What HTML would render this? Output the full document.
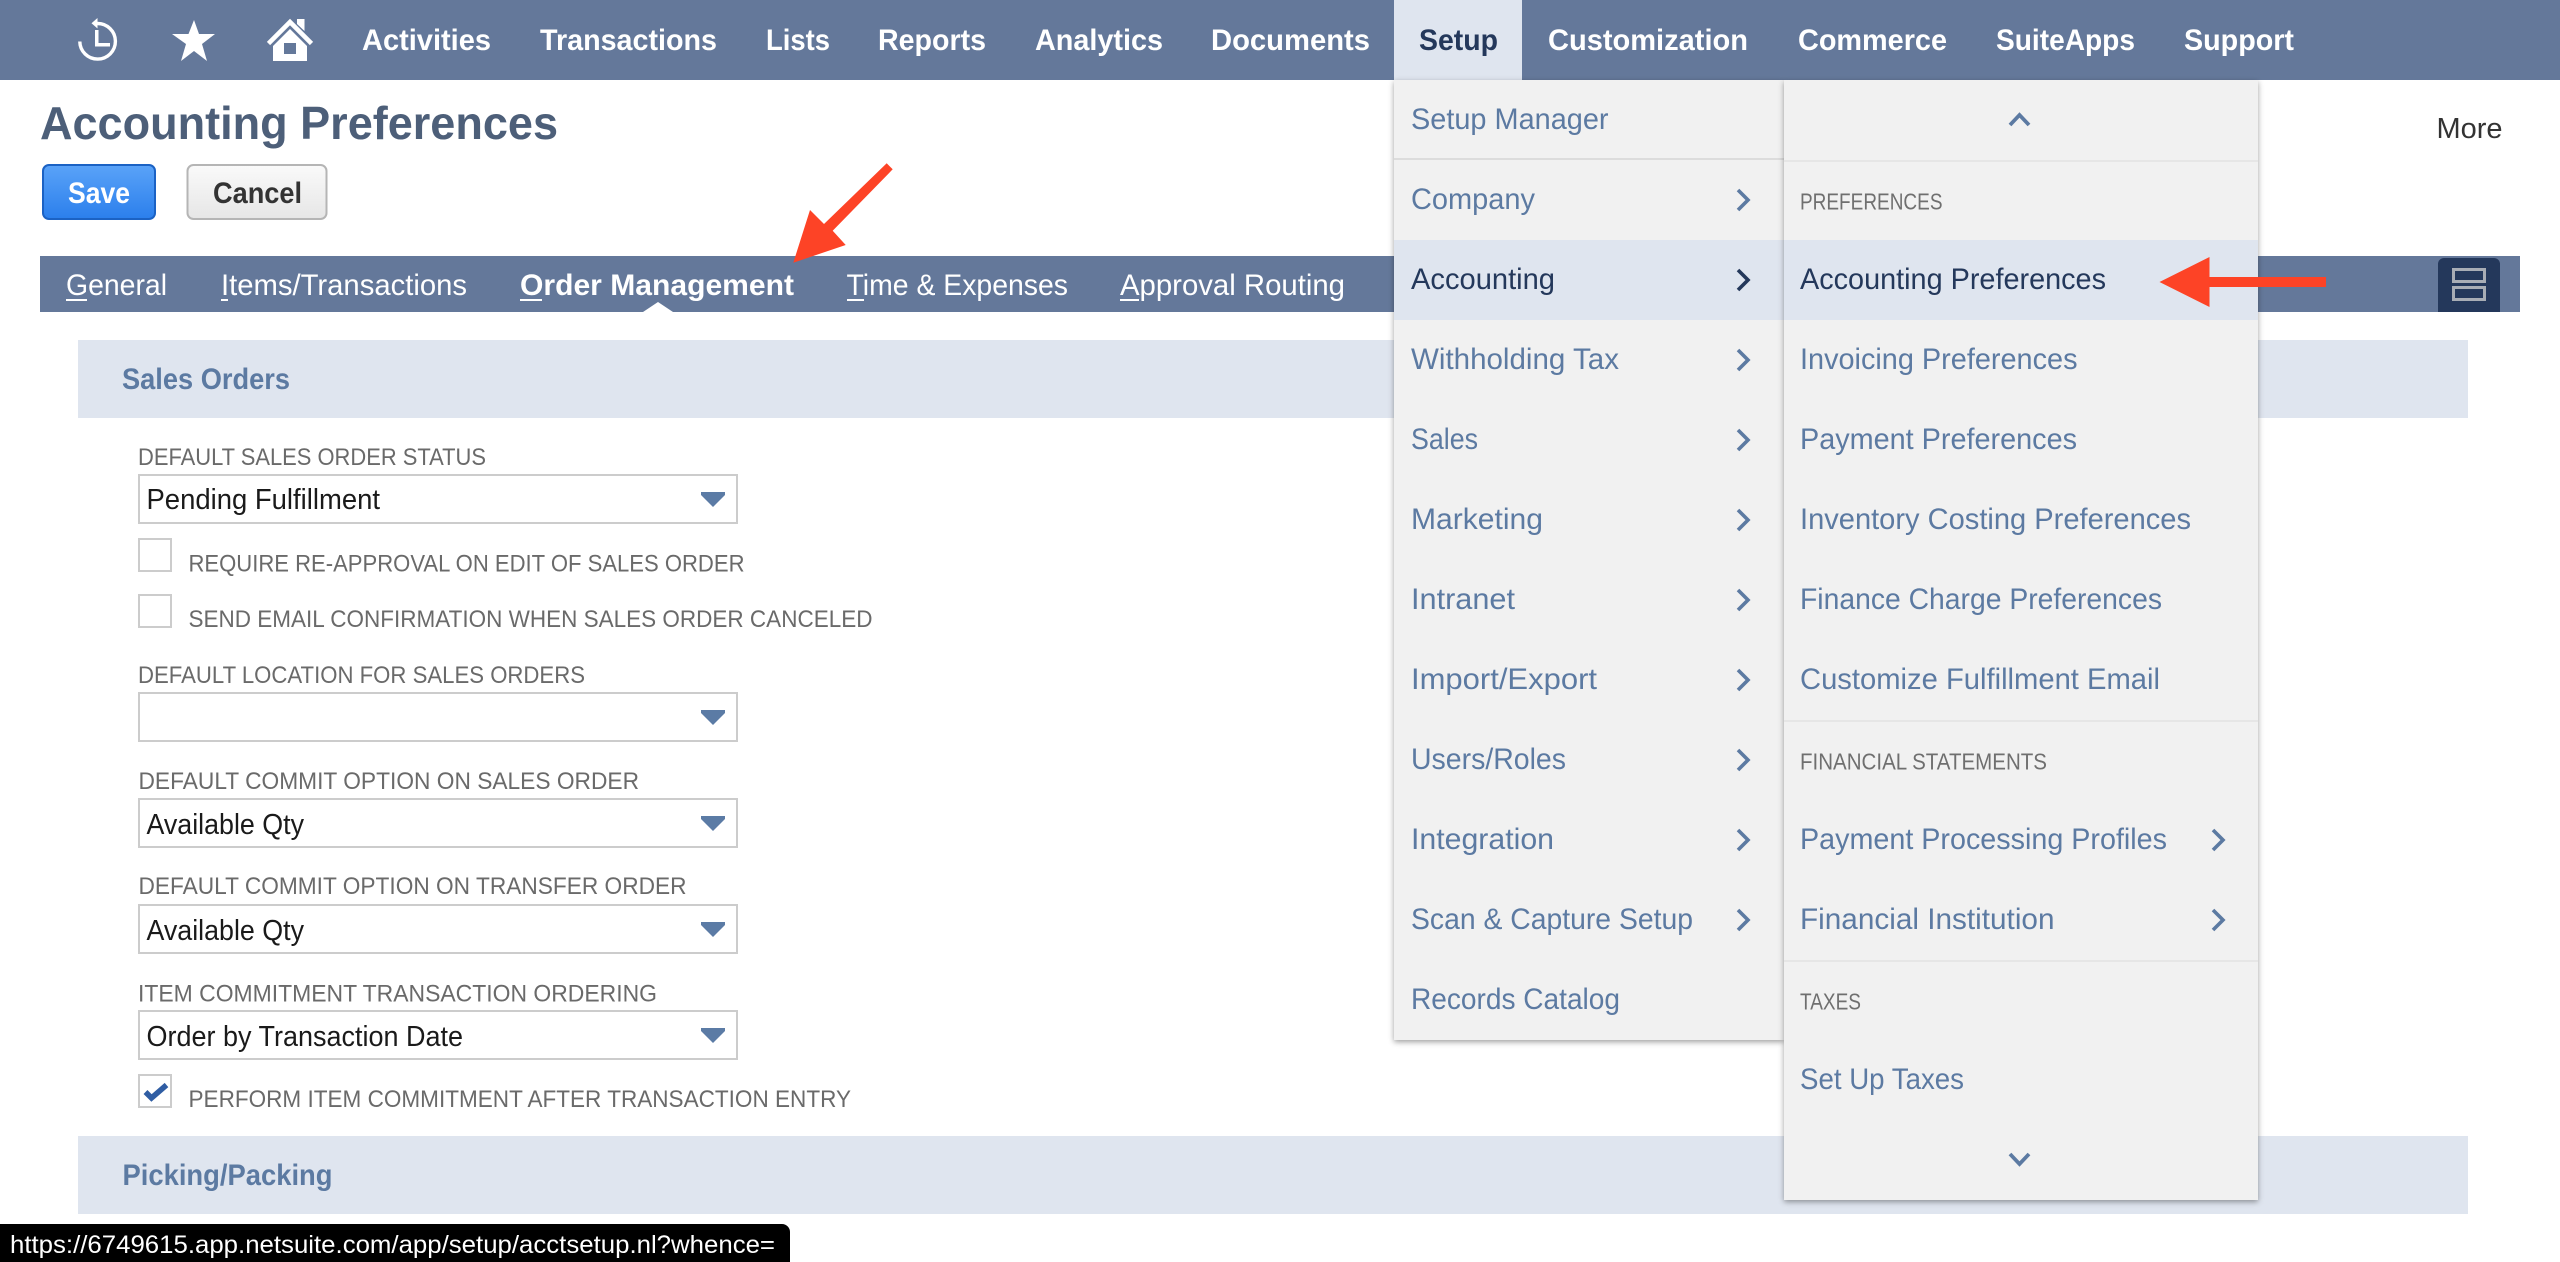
<!DOCTYPE html>
<html lang="en">
<head>
<meta charset="utf-8">
<title>Accounting Preferences</title>
<style>
html,body{margin:0;padding:0;background:#fff;width:2560px;height:1262px;overflow:hidden}
svg{display:block}
text{font-family:"Liberation Sans",Arial,sans-serif;white-space:pre}
.nav{font-size:30px;font-weight:700;fill:#fff}
.tab{font-size:29.500px;fill:#fff}
.m{font-size:29.500px;fill:#5c7aa2}
.d{font-size:29.500px;fill:#24385b}
.h{font-size:23px;fill:#6f6f6f}
.l{font-size:24.500px;fill:#6a6a6a}
.v{font-size:28.500px;fill:#1a1a1a}
.s{font-size:29.500px;font-weight:700;fill:#5c7aa2}
</style>
</head>
<body>
<svg xmlns="http://www.w3.org/2000/svg" width="2560" height="1262" viewBox="0 0 2560 1262">
<defs>
<linearGradient id="gs" x1="0" y1="0" x2="0" y2="1"><stop offset="0" stop-color="#5aa3f8"/><stop offset="1" stop-color="#2b7fec"/></linearGradient>
<linearGradient id="gc" x1="0" y1="0" x2="0" y2="1"><stop offset="0" stop-color="#fafafa"/><stop offset="1" stop-color="#e6e6e6"/></linearGradient>
<filter id="sh" x="-5%" y="-5%" width="110%" height="110%"><feDropShadow dx="0" dy="2" stdDeviation="3" flood-color="#000" flood-opacity=".38"/></filter>
</defs>

<!-- top nav -->
<rect x="0" y="0" width="2560" height="80" fill="#64789a"/>
<!-- history icon -->
<path d="M97.500 23.500A17.800 17.800 0 1 1 79.800 41.500" fill="none" stroke="#fff" stroke-width="3.400"/>
<path d="M91.500 23.300L97.500 18V28.500Z" fill="#fff"/>
<path d="M95 30H98.500V43H110V46.500H95Z" fill="#fff"/>
<!-- star -->
<path d="M194 20L199 34H215L202 44L207 61L194 51L181 61L186 44L172 34H188.500Z" fill="#fff"/>
<!-- home -->
<path d="M268.500 43.500L290 22L311.500 43.500" fill="none" stroke="#fff" stroke-width="4.600"/>
<path d="M297 19H304.500V31L297 24Z" fill="#fff"/>
<path fill-rule="evenodd" d="M290 29L307 46V61H273V46ZM284 43V54H296V43Z" fill="#fff"/>

<text class="nav" x="362" y="50" textLength="129" lengthAdjust="spacingAndGlyphs">Activities</text>
<text class="nav" x="540" y="50" textLength="177" lengthAdjust="spacingAndGlyphs">Transactions</text>
<text class="nav" x="766" y="50" textLength="64" lengthAdjust="spacingAndGlyphs">Lists</text>
<text class="nav" x="878" y="50" textLength="108" lengthAdjust="spacingAndGlyphs">Reports</text>
<text class="nav" x="1035" y="50" textLength="128" lengthAdjust="spacingAndGlyphs">Analytics</text>
<text class="nav" x="1211" y="50" textLength="159" lengthAdjust="spacingAndGlyphs">Documents</text>
<rect x="1394" y="0" width="128" height="80" fill="#dfe5ef"/>
<text class="nav" x="1419" y="50" textLength="79" lengthAdjust="spacingAndGlyphs" style="fill:#24385b">Setup</text>
<text class="nav" x="1548" y="50" textLength="200" lengthAdjust="spacingAndGlyphs">Customization</text>
<text class="nav" x="1798" y="50" textLength="149" lengthAdjust="spacingAndGlyphs">Commerce</text>
<text class="nav" x="1996" y="50" textLength="139" lengthAdjust="spacingAndGlyphs">SuiteApps</text>
<text class="nav" x="2184" y="50" textLength="110" lengthAdjust="spacingAndGlyphs">Support</text>

<!-- title -->
<text x="40" y="139" textLength="518" lengthAdjust="spacingAndGlyphs" style="font-size:46px;font-weight:700;fill:#4d5f79">Accounting Preferences</text>
<text x="2436.500" y="138" textLength="66" lengthAdjust="spacingAndGlyphs" style="font-size:29px;fill:#333">More</text>

<!-- buttons -->
<rect x="43" y="165" width="112" height="54" rx="6" fill="url(#gs)" stroke="#1b62c4" stroke-width="2"/>
<text x="68" y="203" textLength="62" lengthAdjust="spacingAndGlyphs" style="font-size:29.500px;font-weight:700;fill:#fff">Save</text>
<rect x="187.500" y="165" width="139" height="54" rx="6" fill="url(#gc)" stroke="#b5b5b5" stroke-width="2"/>
<text x="213" y="203" textLength="89" lengthAdjust="spacingAndGlyphs" style="font-size:29.500px;font-weight:700;fill:#333">Cancel</text>

<!-- tabs -->
<rect x="40" y="256" width="2480" height="56" fill="#64789a"/>
<text class="tab" x="66" y="295" textLength="101" lengthAdjust="spacingAndGlyphs">General</text>
<rect x="66" y="299" width="21" height="2" fill="#fff"/>
<text class="tab" x="221" y="295" textLength="246" lengthAdjust="spacingAndGlyphs">Items/Transactions</text>
<rect x="221" y="299" width="7" height="2" fill="#fff"/>
<text class="tab" x="520" y="295" textLength="274" lengthAdjust="spacingAndGlyphs" style="font-weight:700">Order Management</text>
<rect x="520" y="299" width="22" height="2" fill="#fff"/>
<path d="M643 312L658 302L673 312Z" fill="#fff"/>
<text class="tab" x="846.500" y="295" textLength="221.500" lengthAdjust="spacingAndGlyphs">Time &amp; Expenses</text>
<rect x="847" y="299" width="17" height="2" fill="#fff"/>
<text class="tab" x="1120" y="295" textLength="225" lengthAdjust="spacingAndGlyphs">Approval Routing</text>
<rect x="1120" y="299" width="19" height="2" fill="#fff"/>
<path d="M2438 312V264a6 6 0 0 1 6-6H2494a6 6 0 0 1 6 6V312Z" fill="#24385b"/>
<rect x="2453.500" y="269.500" width="31" height="12" fill="none" stroke="#a8adb5" stroke-width="3"/>
<rect x="2453.500" y="287.500" width="31" height="12" fill="none" stroke="#a8adb5" stroke-width="3"/>

<!-- section bands -->
<rect x="78" y="340" width="2390" height="78" fill="#dfe5ef"/>
<text class="s" x="122" y="389" textLength="168" lengthAdjust="spacingAndGlyphs">Sales Orders</text>
<rect x="78" y="1136" width="2390" height="78" fill="#dfe5ef"/>
<text class="s" x="122.500" y="1185" textLength="210" lengthAdjust="spacingAndGlyphs">Picking/Packing</text>

<!-- form -->
<text class="l" x="138" y="465" textLength="348" lengthAdjust="spacingAndGlyphs">DEFAULT SALES ORDER STATUS</text>
<rect x="139" y="475" width="598" height="48" fill="#fff" stroke="#ccc" stroke-width="2"/>
<text class="v" x="146.500" y="509" textLength="233.500" lengthAdjust="spacingAndGlyphs">Pending Fulfillment</text>
<path d="M701 492H725V495L713 507L701 495Z" fill="#5b7ba5"/>

<rect x="139" y="539" width="32" height="32" fill="#fff" stroke="#ccc" stroke-width="2"/>
<text class="l" x="188.500" y="571.500" textLength="556" lengthAdjust="spacingAndGlyphs">REQUIRE RE-APPROVAL ON EDIT OF SALES ORDER</text>
<rect x="139" y="595" width="32" height="32" fill="#fff" stroke="#ccc" stroke-width="2"/>
<text class="l" x="188.500" y="627" textLength="684" lengthAdjust="spacingAndGlyphs">SEND EMAIL CONFIRMATION WHEN SALES ORDER CANCELED</text>

<text class="l" x="138" y="683" textLength="447" lengthAdjust="spacingAndGlyphs">DEFAULT LOCATION FOR SALES ORDERS</text>
<rect x="139" y="693" width="598" height="48" fill="#fff" stroke="#ccc" stroke-width="2"/>
<path d="M701 710H725V713L713 725L701 713Z" fill="#5b7ba5"/>

<text class="l" x="138.500" y="789" textLength="500.500" lengthAdjust="spacingAndGlyphs">DEFAULT COMMIT OPTION ON SALES ORDER</text>
<rect x="139" y="799" width="598" height="48" fill="#fff" stroke="#ccc" stroke-width="2"/>
<text class="v" x="146.500" y="834" textLength="157.500" lengthAdjust="spacingAndGlyphs">Available Qty</text>
<path d="M701 816H725V819L713 831L701 819Z" fill="#5b7ba5"/>

<text class="l" x="138.500" y="894" textLength="548" lengthAdjust="spacingAndGlyphs">DEFAULT COMMIT OPTION ON TRANSFER ORDER</text>
<rect x="139" y="905" width="598" height="48" fill="#fff" stroke="#ccc" stroke-width="2"/>
<text class="v" x="146.500" y="940" textLength="157.500" lengthAdjust="spacingAndGlyphs">Available Qty</text>
<path d="M701 922H725V925L713 937L701 925Z" fill="#5b7ba5"/>

<text class="l" x="138" y="1001.500" textLength="519" lengthAdjust="spacingAndGlyphs">ITEM COMMITMENT TRANSACTION ORDERING</text>
<rect x="139" y="1011" width="598" height="48" fill="#fff" stroke="#ccc" stroke-width="2"/>
<text class="v" x="146.500" y="1046" textLength="316.500" lengthAdjust="spacingAndGlyphs">Order by Transaction Date</text>
<path d="M701 1028H725V1031L713 1043L701 1031Z" fill="#5b7ba5"/>

<rect x="139" y="1075" width="32" height="32" fill="#fff" stroke="#ccc" stroke-width="2"/>
<path d="M145.500 1092L151.500 1098L166.500 1085" fill="none" stroke="#2f5da3" stroke-width="5.500"/>
<text class="l" x="188.500" y="1107" textLength="662.500" lengthAdjust="spacingAndGlyphs">PERFORM ITEM COMMITMENT AFTER TRANSACTION ENTRY</text>

<!-- menu 1 -->
<g filter="url(#sh)"><rect x="1394" y="80" width="390" height="960" fill="#f1f1f1"/></g>
<rect x="1394" y="158" width="390" height="2" fill="#dcdcdc"/>
<rect x="1394" y="240" width="390" height="80" fill="#dfe5ef"/>
<text class="m" x="1411" y="129" textLength="197.500" lengthAdjust="spacingAndGlyphs">Setup Manager</text>
<text class="m" x="1411" y="209" textLength="124" lengthAdjust="spacingAndGlyphs">Company</text>
<text class="d" x="1411" y="289" textLength="144" lengthAdjust="spacingAndGlyphs">Accounting</text>
<text class="m" x="1411" y="369" textLength="208" lengthAdjust="spacingAndGlyphs">Withholding Tax</text>
<text class="m" x="1411" y="449" textLength="67" lengthAdjust="spacingAndGlyphs">Sales</text>
<text class="m" x="1411" y="529" textLength="132" lengthAdjust="spacingAndGlyphs">Marketing</text>
<text class="m" x="1411" y="609" textLength="104" lengthAdjust="spacingAndGlyphs">Intranet</text>
<text class="m" x="1411" y="689" textLength="186" lengthAdjust="spacingAndGlyphs">Import/Export</text>
<text class="m" x="1411" y="769" textLength="155" lengthAdjust="spacingAndGlyphs">Users/Roles</text>
<text class="m" x="1411" y="849" textLength="143" lengthAdjust="spacingAndGlyphs">Integration</text>
<text class="m" x="1411" y="929" textLength="282" lengthAdjust="spacingAndGlyphs">Scan &amp; Capture Setup</text>
<text class="m" x="1411" y="1009" textLength="209" lengthAdjust="spacingAndGlyphs">Records Catalog</text>
<g fill="none" stroke="#5c7aa2" stroke-width="3.600">
<path d="M1738 190L1748 200L1738 210"/>
<path d="M1738 350L1748 360L1738 370"/>
<path d="M1738 430L1748 440L1738 450"/>
<path d="M1738 510L1748 520L1738 530"/>
<path d="M1738 590L1748 600L1738 610"/>
<path d="M1738 670L1748 680L1738 690"/>
<path d="M1738 750L1748 760L1738 770"/>
<path d="M1738 830L1748 840L1738 850"/>
<path d="M1738 910L1748 920L1738 930"/>
</g>
<path d="M1738 270L1748 280L1738 290" fill="none" stroke="#24385b" stroke-width="3.600"/>

<!-- menu 2 -->
<g filter="url(#sh)"><rect x="1784" y="80" width="474" height="1120" fill="#f1f1f1"/></g>
<rect x="1784" y="160" width="474" height="2" fill="#e6e6e6"/>
<rect x="1784" y="240" width="474" height="80" fill="#dfe5ef"/>
<rect x="1784" y="720" width="474" height="2" fill="#e6e6e6"/>
<rect x="1784" y="960" width="474" height="2" fill="#e6e6e6"/>
<path d="M2010 125L2019.500 115L2029 125" fill="none" stroke="#5c7aa2" stroke-width="3.800"/>
<text class="h" x="1800" y="209.500" textLength="142.500" lengthAdjust="spacingAndGlyphs">PREFERENCES</text>
<text class="d" x="1800" y="289" textLength="306" lengthAdjust="spacingAndGlyphs">Accounting Preferences</text>
<text class="m" x="1800" y="369" textLength="277.500" lengthAdjust="spacingAndGlyphs">Invoicing Preferences</text>
<text class="m" x="1800" y="449" textLength="277" lengthAdjust="spacingAndGlyphs">Payment Preferences</text>
<text class="m" x="1800" y="529" textLength="391" lengthAdjust="spacingAndGlyphs">Inventory Costing Preferences</text>
<text class="m" x="1800" y="609" textLength="362" lengthAdjust="spacingAndGlyphs">Finance Charge Preferences</text>
<text class="m" x="1800" y="689" textLength="360" lengthAdjust="spacingAndGlyphs">Customize Fulfillment Email</text>
<text class="h" x="1800" y="769.500" textLength="247" lengthAdjust="spacingAndGlyphs">FINANCIAL STATEMENTS</text>
<text class="m" x="1800" y="849" textLength="367" lengthAdjust="spacingAndGlyphs">Payment Processing Profiles</text>
<text class="m" x="1800" y="929" textLength="254.500" lengthAdjust="spacingAndGlyphs">Financial Institution</text>
<text class="h" x="1800" y="1009.500" textLength="61" lengthAdjust="spacingAndGlyphs">TAXES</text>
<text class="m" x="1800" y="1089" textLength="164" lengthAdjust="spacingAndGlyphs">Set Up Taxes</text>
<path d="M2213 830L2223 840L2213 850" fill="none" stroke="#5c7aa2" stroke-width="3.600"/>
<path d="M2213 910L2223 920L2213 930" fill="none" stroke="#5c7aa2" stroke-width="3.600"/>
<path d="M2010 1154L2019.500 1164L2029 1154" fill="none" stroke="#5c7aa2" stroke-width="3.800"/>

<!-- red arrows -->
<path d="M793.300 262.700L810 210L824 224L886.700 163.300L892.700 169.300L832.700 230.700L845.700 245Z" fill="#fd4326"/>
<path d="M2159.500 282L2209.500 257V277H2326V287H2209.500V307Z" fill="#fd4326"/>

<!-- status bubble -->
<path d="M0 1224H782a8 8 0 0 1 8 8V1262H0Z" fill="#000"/>
<text x="10" y="1253" textLength="765" lengthAdjust="spacingAndGlyphs" style="font-size:25px;fill:#fff">https://6749615.app.netsuite.com/app/setup/acctsetup.nl?whence=</text>
</svg>
</body>
</html>
